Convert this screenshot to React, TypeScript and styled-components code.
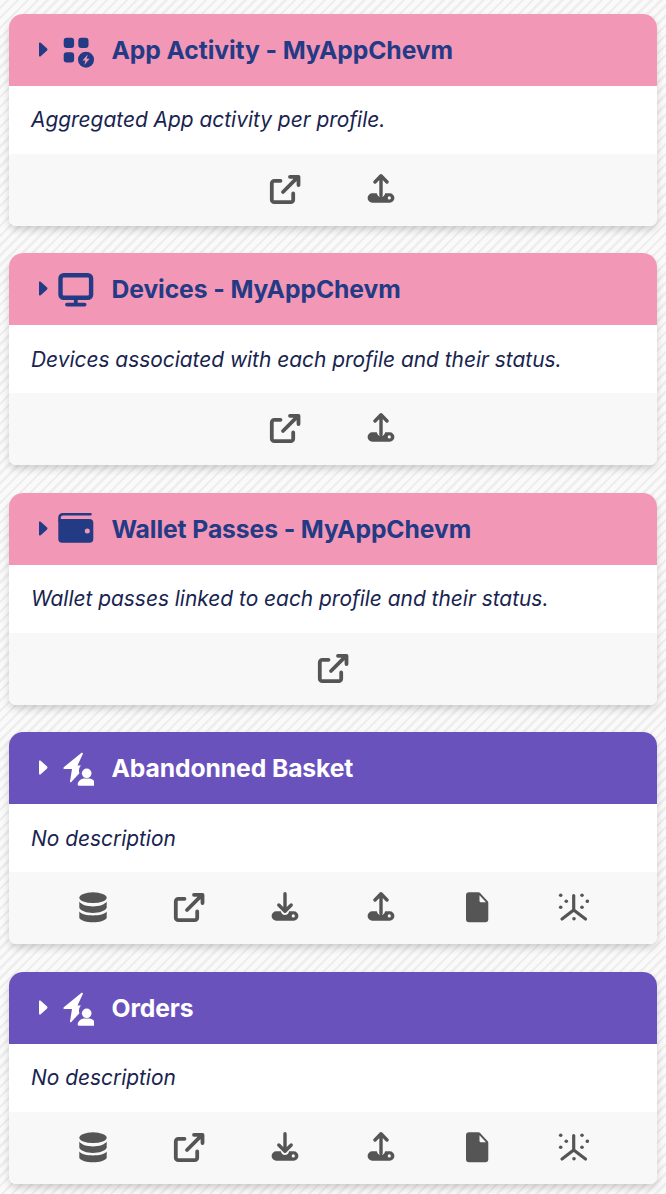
import React from 'react';
import styled, { createGlobalStyle } from 'styled-components';

const GlobalStyle = createGlobalStyle`
  html, body { margin: 0; padding: 0; }
  body {
    font-family: "Inter", "Open Sans", sans-serif;
    background-color: #f7f7f7;
    background-image: repeating-linear-gradient(
      135deg,
      #fafafa 0px,
      #fafafa 4.500px,
      #eeeeee 4.500px,
      #eeeeee 7px
    );
  }
`;

const Page = styled.div`
  width: 666px;
  height: 1194px;
  box-sizing: border-box;
  padding: 13.700px 9px 0;
  display: flex;
  flex-direction: column;
  gap: 27.500px;
  overflow: hidden;
`;

const Card = styled.section`
  border-radius: 14px 14px 7px 7px;
  overflow: hidden;
  background: #fff;
  box-shadow: 0 4px 8px -1px rgba(0, 0, 0, 0.2);
  flex: none;
`;

const Header = styled.header<{ $tone: 'pink' | 'purple' }>`
  height: 72px;
  display: flex;
  align-items: center;
  padding-left: 30px;
  background: ${(p) => (p.$tone === 'pink' ? '#f397b6' : '#6a52bd')};
  color: ${(p) => (p.$tone === 'pink' ? '#233a85' : '#ffffff')};
`;

const Caret = styled.svg`
  width: 9px;
  height: 15px;
  flex: none;
  margin-top: -1px;
  margin-right: -1px;
`;

const HeaderIcon = styled.svg`
  width: 36px;
  height: 36px;
  margin-left: 11px;
  flex: none;
`;

const Title = styled.h2`
  margin: 0 0 0 17.500px;
  font-size: 24.700px;
  font-weight: 700;
  letter-spacing: -0.1px;
  white-space: nowrap;
`;

const Description = styled.p`
  margin: 0;
  height: 68px;
  box-sizing: border-box;
  padding-left: 22px;
  display: flex;
  align-items: center;
  font-size: 20.900px;
  font-style: italic;
  color: #18244f;
  white-space: nowrap;
`;

const Footer = styled.footer`
  height: 72px;
  display: flex;
  justify-content: center;
  align-items: center;
  background: #f8f8f8;
`;

const ActionButton = styled.button`
  width: 96px;
  height: 72px;
  padding: 0;
  border: 0;
  background: none;
  color: #555555;
  display: flex;
  align-items: center;
  justify-content: center;
`;

const ActionIcon = styled.svg`
  width: 32px;
  height: 32px;
`;

type IconKind = 'apps' | 'monitor' | 'wallet' | 'bolt';
type ActionKind = 'database' | 'external' | 'download' | 'upload' | 'file' | 'split';

const CaretIcon = () => (
  <Caret viewBox="0 0 9 15">
    <path d="M1.700.700 7.800 6.300a1.600 1.600 0 0 1 0 2.400L1.700 14.300A1 1 0 0 1 0 13.500V1.500A1 1 0 0 1 1.700.700Z" fill="currentColor" />
  </Caret>
);

const headerIcons: Record<IconKind, (bg: string) => React.ReactNode> = {
  apps: (bg) => (
    <>
      <rect x="5.700" y="5.700" width="10.400" height="10.200" rx="3" fill="currentColor" />
      <rect x="20.300" y="5.700" width="10.200" height="10.200" rx="3" fill="currentColor" />
      <rect x="5.700" y="20.300" width="10.400" height="10.200" rx="3" fill="currentColor" />
      <circle cx="28" cy="27.700" r="8" fill="currentColor" />
      <path d="M29.800 22.500 24.500 28.600h2.900l-1.100 4.300 5.300-6.200h-3Z" fill={bg} />
    </>
  ),
  monitor: () => (
    <>
      <rect x="2.500" y="4.200" width="30.600" height="22.600" rx="3.200" fill="none" stroke="currentColor" strokeWidth="4.400" />
      <path d="M17.800 28v5.500M9 33.600h17.600" fill="none" stroke="currentColor" strokeWidth="3.800" strokeLinecap="round" />
    </>
  ),
  wallet: (bg) => (
    <>
      <path d="M1.500 10V6.500a3.200 3.200 0 0 1 3.200-3.200H32.500" fill="none" stroke="currentColor" strokeWidth="2.600" strokeLinecap="round" />
      <path d="M3 8H31.300a4 4 0 0 1 4 4v16a3.700 3.700 0 0 1-3.700 3.700H4a3.700 3.700 0 0 1-3.700-3.700V10.500A2.500 2.500 0 0 1 3 8Z" fill="currentColor" />
      <circle cx="29.300" cy="20" r="2.500" fill={bg} />
    </>
  ),
  bolt: () => (
    <>
      <path d="M23.300 2.900c.9-.6 1.900.3 1.500 1.200L19.500 15.500H23c-1.700 1.700-2.700 5-1.600 7.700L13.300 32c-.5.700-1.500.3-1.300-.6L14 19H6.500c-1.100 0-1.500-1.100-.7-1.800Z" fill="currentColor" />
      <circle cx="28.700" cy="23.300" r="4.800" fill="currentColor" />
      <path d="M21.700 35.800c-1.500 0-2.300-1-1.900-2.200.8-3 3.500-5.200 6.500-5.200h4.900c3 0 5.400 2.200 6 5.200.3 1.200-.4 2.200-1.900 2.200Z" fill="currentColor" />
    </>
  ),
};

// tray shared by the upload and download icons, the small hole is the led dot
const Tray = () => (
  <path
    fillRule="evenodd"
    d="M7.300 19.300h4.500c.5 2.300 2 3.700 4.200 3.700s3.700-1.400 4.200-3.700h4.500a4.700 4.700 0 0 1 0 9.400H7.300a4.700 4.700 0 0 1 0-9.400ZM24.300 22.300a1.600 1.600 0 1 0 0 3.200 1.600 1.600 0 0 0 0-3.200Z"
    fill="currentColor"
  />
);

const actionIcons: Record<ActionKind, React.ReactNode> = {
  database: (
    <>
      <ellipse cx="16" cy="5.700" rx="13.700" ry="5.400" fill="currentColor" />
      <path d="M2.300 9.500c2 3.200 7.500 4.900 13.700 4.900s11.700-1.700 13.700-4.900v6.300c-1.500 3.200-7.500 5.200-13.700 5.200S3.800 19 2.300 15.800Z" fill="currentColor" />
      <path d="M2.300 19.500c2 3 7.500 3.900 13.700 3.900s11.700-.9 13.700-3.900v6.500c-1.500 2.800-7.500 4.300-13.700 4.300S3.800 28.800 2.300 26Z" fill="currentColor" />
    </>
  ),
  external: (
    <g fill="none" stroke="currentColor" strokeWidth="3.800" strokeLinecap="round" strokeLinejoin="round">
      <path d="M11.500 6.800H5.300a2.500 2.500 0 0 0-2.500 2.500v16.400a2.500 2.500 0 0 0 2.500 2.500h16.400a2.500 2.500 0 0 0 2.500-2.500V19.500" />
      <path d="M14 18 28.800 3.200M21 2.800h8.500V11" />
    </g>
  ),
  download: (
    <>
      <Tray />
      <path d="M16 1.700V19M9.800 13 16 19.300 22.200 13" fill="none" stroke="currentColor" strokeWidth="3.400" strokeLinecap="round" strokeLinejoin="round" />
    </>
  ),
  upload: (
    <>
      <Tray />
      <path d="M16 2v19.500M10 8l6-6.200L22 8" fill="none" stroke="currentColor" strokeWidth="3.400" strokeLinecap="round" strokeLinejoin="round" />
    </>
  ),
  file: (
    <>
      <path d="M8 .3h9.300c.7 0 1.300.3 1.800.8l7.400 8c.5.500.8 1.100.8 1.700v16.500a3 3 0 0 1-3 3H8a3 3 0 0 1-3-3V3.300a3 3 0 0 1 3-3Z" fill="currentColor" />
      <path d="M18.500 3.200 25 10.300H20a1.500 1.500 0 0 1-1.500-1.500Z" fill="#f8f8f8" />
    </>
  ),
  split: (
    <>
      <path d="M16.700 3.500V18M16.700 18 5 27M16.700 18 28.500 27" fill="none" stroke="currentColor" strokeWidth="3.200" strokeLinecap="round" />
      {[
        [3.700, 3.300],
        [25, 3.300],
        [9.300, 9.300],
        [30.300, 9.300],
        [3.700, 15.300],
        [25, 15.300],
        [17, 26.700],
      ].map(([cx, cy]) => (
        <circle key={`${cx}-${cy}`} cx={cx} cy={cy} r="1.800" fill="currentColor" />
      ))}
    </>
  ),
};

type CardData = {
  title: string;
  description: string;
  tone: 'pink' | 'purple';
  icon: IconKind;
  actions: ActionKind[];
};

const allActions: ActionKind[] = ['database', 'external', 'download', 'upload', 'file', 'split'];

const cards: CardData[] = [
  {
    title: 'App Activity - MyAppChevm',
    description: 'Aggregated App activity per profile.',
    tone: 'pink',
    icon: 'apps',
    actions: ['external', 'upload'],
  },
  {
    title: 'Devices - MyAppChevm',
    description: 'Devices associated with each profile and their status.',
    tone: 'pink',
    icon: 'monitor',
    actions: ['external', 'upload'],
  },
  {
    title: 'Wallet Passes - MyAppChevm',
    description: 'Wallet passes linked to each profile and their status.',
    tone: 'pink',
    icon: 'wallet',
    actions: ['external'],
  },
  {
    title: 'Abandonned Basket',
    description: 'No description',
    tone: 'purple',
    icon: 'bolt',
    actions: allActions,
  },
  {
    title: 'Orders',
    description: 'No description',
    tone: 'purple',
    icon: 'bolt',
    actions: allActions,
  },
];

const App = () => (
  <>
    <GlobalStyle />
    <Page>
      {cards.map((card) => (
        <Card key={card.title}>
          <Header $tone={card.tone}>
            <CaretIcon />
            <HeaderIcon viewBox="0 0 36 36">
              {headerIcons[card.icon](card.tone === 'pink' ? '#f397b6' : '#6a52bd')}
            </HeaderIcon>
            <Title>{card.title}</Title>
          </Header>
          <Description>{card.description}</Description>
          <Footer>
            {card.actions.map((action) => (
              <ActionButton key={action} aria-label={action}>
                <ActionIcon viewBox="0 0 32 32">{actionIcons[action]}</ActionIcon>
              </ActionButton>
            ))}
          </Footer>
        </Card>
      ))}
    </Page>
  </>
);

export default App;
